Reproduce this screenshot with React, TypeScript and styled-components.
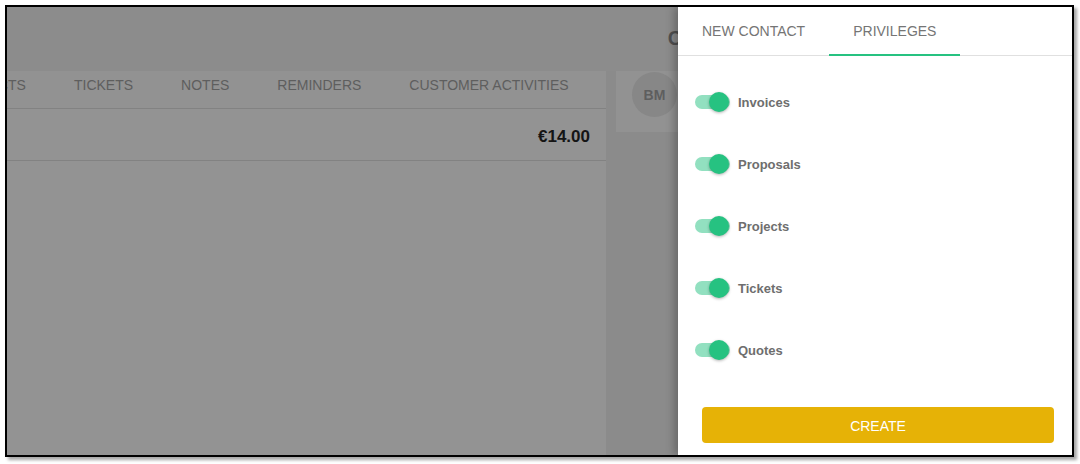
import React from "react";
import styled, { createGlobalStyle } from "styled-components";

const Global = createGlobalStyle`
  html, body { margin: 0; padding: 0; background: #ffffff; }
  body { font-family: "Liberation Sans", Arial, sans-serif; }
  * { box-sizing: border-box; }
`;

const Canvas = styled.div`
  width: 1080px;
  height: 464px;
  padding: 5px 0 0 5px;
  background: #ffffff;
`;

const Frame = styled.div`
  width: 1069px;
  height: 452px;
  border: 2px solid #000;
  box-shadow: 3px 3px 3px rgba(0, 0, 0, 0.35);
  display: flex;
  overflow: hidden;
`;

const Page = styled.div`
  flex: 1;
  display: flex;
  flex-direction: column;
  background: #939393;
  min-width: 0;
  overflow: hidden;
`;

const Header = styled.div`
  height: 64px;
  background: #8c8c8c;
  display: flex;
  align-items: center;
  justify-content: flex-end;
`;

const Title = styled.div`
  font-size: 20px;
  font-weight: 700;
  color: #505050;
  margin-right: -83px;
  white-space: nowrap;
  margin-top: -2px;
`;

const Body = styled.div`
  flex: 1;
  display: flex;
`;

const Main = styled.div`
  width: 599px;
  display: flex;
  flex-direction: column;
  background: #939393;
  overflow: hidden;
`;

const TabBar = styled.div`
  height: 38px;
  background: #929292;
  border-bottom: 1px solid #828282;
  display: flex;
  margin-left: -81px;
  padding-bottom: 10px;
`;

const PageTab = styled.div`
  padding: 0 24px;
  display: flex;
  align-items: center;
  font-size: 14px;
  color: #5e5e5e;
  white-space: nowrap;
`;

const AmountRow = styled.div`
  height: 52px;
  border-bottom: 1px solid #828282;
  display: flex;
  align-items: center;
  justify-content: flex-end;
  padding: 4px 16px 0 0;
`;

const Amount = styled.div`
  font-size: 17px;
  font-weight: 700;
  color: #151515;
`;

const Side = styled.div`
  flex: 1;
  background: #8b8b8b;
  padding-left: 10px;
  overflow: hidden;
`;

const Card = styled.div`
  height: 61px;
  width: 100px;
  background: #929292;
  padding: 1px 0 0 16px;
`;

const Avatar = styled.div`
  width: 45px;
  height: 45px;
  border-radius: 50%;
  background: #878787;
  display: flex;
  align-items: center;
  justify-content: center;
  font-size: 14px;
  font-weight: 700;
  color: #5e5e5e;
`;

const Drawer = styled.div`
  width: 394px;
  background: #ffffff;
  display: flex;
  flex-direction: column;
  box-shadow: -4px 0 8px rgba(0, 0, 0, 0.25);
  position: relative;
`;

const DrawerTabs = styled.div`
  height: 49px;
  display: flex;
  border-bottom: 1px solid #e0e0e0;
`;

const DrawerTab = styled.div<{ $active?: boolean }>`
  padding: 0 24px;
  display: flex;
  align-items: center;
  font-size: 14px;
  color: #757575;
  white-space: nowrap;
  border-bottom: 2px solid ${(p) => (p.$active ? "#26c281" : "transparent")};
  margin-bottom: -1px;
  padding-top: 1px;
`;

const List = styled.div`
  padding: 15px 0 0 17px;
  display: flex;
  flex-direction: column;
`;

const Row = styled.div`
  height: 62px;
  display: flex;
  align-items: center;
  gap: 8px;
`;

const Track = styled.div`
  position: relative;
  width: 35px;
  height: 14px;
  border-radius: 7px;
  background: #92e0c0;
`;

const Thumb = styled.div`
  position: absolute;
  right: 1px;
  top: -3px;
  width: 20px;
  height: 20px;
  border-radius: 50%;
  background: #26c281;
  box-shadow: 0 1px 3px rgba(0, 0, 0, 0.3);
`;

const Label = styled.div`
  font-size: 13px;
  font-weight: 700;
  color: #6e6e6e;
`;

const Footer = styled.div`
  margin-top: auto;
  padding: 0 18px 12px 24px;
`;

const CreateButton = styled.button`
  width: 100%;
  height: 36px;
  border: none;
  border-radius: 4px;
  background: #e6b206;
  color: #ffffff;
  font-family: "Liberation Sans", Arial, sans-serif;
  font-size: 14px;
  padding-top: 2px;
  cursor: pointer;
`;

const pageTabs = ["CONTACTS", "TICKETS", "NOTES", "REMINDERS", "CUSTOMER ACTIVITIES"];
const privileges = ["Invoices", "Proposals", "Projects", "Tickets", "Quotes"];

export default function App() {
  return (
    <>
      <Global />
      <Canvas>
        <Frame>
          <Page>
            <Header>
              <Title>Customer</Title>
            </Header>
            <Body>
              <Main>
                <TabBar>
                  {pageTabs.map((t) => (
                    <PageTab key={t}>{t}</PageTab>
                  ))}
                </TabBar>
                <AmountRow>
                  <Amount>€14.00</Amount>
                </AmountRow>
              </Main>
              <Side>
                <Card>
                  <Avatar>BM</Avatar>
                </Card>
              </Side>
            </Body>
          </Page>
          <Drawer>
            <DrawerTabs>
              <DrawerTab>NEW CONTACT</DrawerTab>
              <DrawerTab $active>PRIVILEGES</DrawerTab>
            </DrawerTabs>
            <List>
              {privileges.map((p) => (
                <Row key={p}>
                  <Track>
                    <Thumb />
                  </Track>
                  <Label>{p}</Label>
                </Row>
              ))}
            </List>
            <Footer>
              <CreateButton>CREATE</CreateButton>
            </Footer>
          </Drawer>
        </Frame>
      </Canvas>
    </>
  );
}
